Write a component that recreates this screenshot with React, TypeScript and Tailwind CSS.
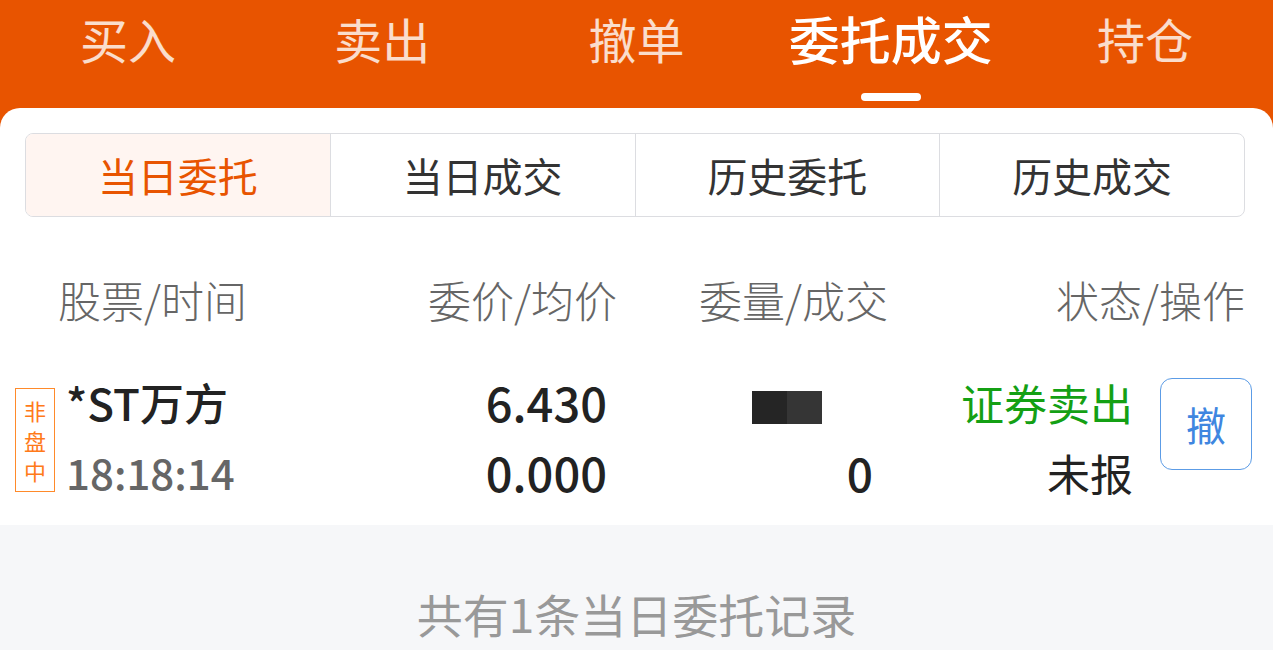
import React from "react";

const navTabs = ["买入", "卖出", "撤单", "委托成交", "持仓"];
const segments = ["当日委托", "当日成交", "历史委托", "历史成交"];

function NavTab({ label, active }: { label: string; active: boolean }) {
  return (
    <div className="flex flex-1 flex-col items-center pt-[8px]">
      <span
        className={
          active
            ? "text-[51px] leading-[60px] font-medium text-white"
            : "text-[48px] leading-[60px] text-white/80"
        }
      >
        {label}
      </span>
      <div className={`mt-[25px] h-[8px] w-[60px] rounded-full ${active ? "bg-white" : "bg-transparent"}`} />
    </div>
  );
}

function SegmentBar() {
  return (
    <div className="ml-[25px] mr-[28px] flex h-[84px] overflow-hidden rounded-[8px] border-[1.5px] border-[#dcdde1]">
      {segments.map((s, i) => (
        <div
          key={s}
          className={`flex flex-1 items-center justify-center text-[40px] ${
            i === 0 ? "bg-[#fff5f1] text-[#e85400]" : "border-l-[1.5px] border-[#dcdde1] text-[#333]"
          }`}
        >
          {s}
        </div>
      ))}
    </div>
  );
}

export default function App() {
  return (
    <div className="h-[650px] w-[1273px] overflow-hidden bg-[#f6f7f9] font-['Noto_Sans_CJK_SC','Noto_Sans',sans-serif]">
      <div className="bg-[#e85400]">
        <nav className="flex h-[108px] px-[1px]">
          {navTabs.map((t) => (
            <NavTab key={t} label={t} active={t === "委托成交"} />
          ))}
        </nav>

        <div className="rounded-t-[20px] bg-white pt-[25px]">
          <SegmentBar />

          {/* column headers */}
          <div className="flex h-[148px] items-center pt-[16px] text-[43px] font-light text-[#666]">
            <div className="w-[360px] pl-[58px]">股票/时间</div>
            <div className="w-[257px] text-right">委价/均价</div>
            <div className="w-[271px] text-right">委量/成交</div>
            <div className="flex-1 pr-[28px] text-right">状态/操作</div>
          </div>

          {/* order row */}
          <div className="flex h-[160px] pt-[2px]">
            <div className="flex w-[66px] items-start pl-[15px] pt-[21px]">
              <div className="flex h-[104px] w-[40px] flex-col items-center justify-center border-[1.5px] border-[#ff8a2a] text-[22px] leading-[30px] text-[#ff7a1a]">
                <span>非</span>
                <span>盘</span>
                <span>中</span>
              </div>
            </div>
            <div className="w-[294px] leading-[70px]">
              <div className="text-[44px] font-medium text-[#222]">*ST万方</div>
              <div className="text-[42px] font-medium text-[#666]">18:18:14</div>
            </div>
            <div className="w-[247px] text-right text-[47px] leading-[70px] font-medium text-[#222]">
              <div>6.430</div>
              <div>0.000</div>
            </div>
            <div className="flex w-[266px] flex-col items-end leading-[70px]">
              <div className="flex h-[70px] w-full items-center justify-center pl-[94px] pt-[10px]">
                <div className="flex h-[33px] w-[70px]">
                  <div className="flex-1 bg-[#252525]" />
                  <div className="flex-1 bg-[#353535]" />
                </div>
              </div>
              <div className="text-[46px] font-medium text-[#222]">0</div>
            </div>
            <div className="w-[260px] text-right text-[43px] leading-[70px]">
              <div className="text-[#14a014]">证券卖出</div>
              <div className="text-[#222]">未报</div>
            </div>
            <div className="pl-[27px] pt-[11px]">
              <button className="flex h-[92px] w-[92px] items-center justify-center rounded-[12px] border-[1.5px] border-[#5c9ce6] text-[40px] text-[#3f86e0]">
                撤
              </button>
            </div>
          </div>
        </div>
      </div>

      <div className="pt-[62px] text-center text-[46px] leading-[52px] text-[#999]">共有1条当日委托记录</div>
    </div>
  );
}
